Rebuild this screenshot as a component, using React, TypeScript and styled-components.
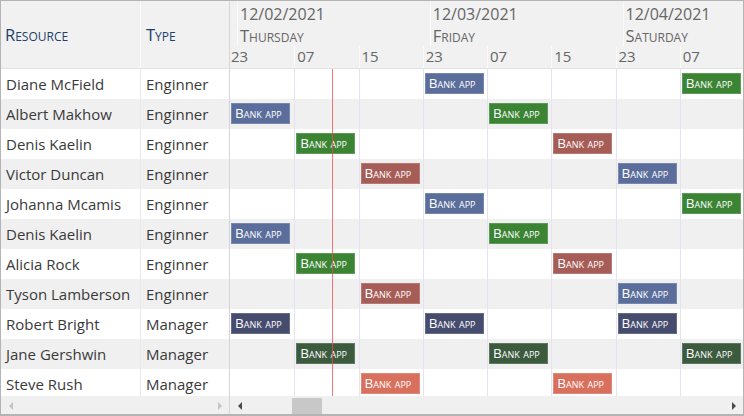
import styled, { createGlobalStyle } from 'styled-components';

const GlobalStyle = createGlobalStyle`
  html, body {
    margin: 0;
    padding: 0;
    background: #fff;
  }
  * {
    box-sizing: border-box;
  }
`;

const FONT = `'Open Sans', 'Noto Sans', 'Liberation Sans', sans-serif`;
const COL_W = 64.25;
const ROW_H = 30;

const Frame = styled.div`
  width: 744px;
  height: 416px;
  border: 1px solid #b4b4b4;
  border-bottom-width: 2px;
  display: flex;
  overflow: hidden;
  font-family: ${FONT};
  background: #fff;
`;

const LeftPane = styled.section`
  width: 229px;
  flex: none;
  display: flex;
  flex-direction: column;
  border-right: 1px solid #d6d6d6;
`;

const RightPane = styled.section`
  flex: 1;
  min-width: 0;
  display: flex;
  flex-direction: column;
  overflow: hidden;
`;

const GridHeader = styled.div`
  height: 68px;
  flex: none;
  display: grid;
  grid-template-columns: 140px 1fr;
  background: #f1f1f1;
  border-bottom: 1px solid #e3e3e3;
`;

const HeaderTitle = styled.div<{ $last?: boolean }>`
  display: flex;
  align-items: center;
  padding: 0 0 0 ${(p) => (p.$last ? '5px' : '4px')};
  font-size: 16.5px;
  font-variant: small-caps;
  color: #243d6e;
  border-right: ${(p) => (p.$last ? 'none' : '1px solid #fafafa')};
`;

const Body = styled.div`
  height: 327px;
  flex: none;
  overflow: hidden;
  position: relative;
`;

const LeftRow = styled.div<{ $alt: boolean }>`
  height: ${ROW_H}px;
  display: grid;
  grid-template-columns: 140px 1fr;
  background: ${(p) => (p.$alt ? '#f0f0f0' : '#fff')};
`;

const Cell = styled.div<{ $first?: boolean }>`
  display: flex;
  align-items: center;
  padding: 0 0 1px 5px;
  font-size: 15px;
  color: #3a3a3a;
  white-space: nowrap;
  border-right: ${(p) => (p.$first ? '1px solid #e9e9e9' : 'none')};
`;

const TimeHeader = styled.div`
  height: 68px;
  flex: none;
  display: flex;
  flex-direction: column;
  background: #f1f1f1;
  border-bottom: 1px solid #e3e3e3;
`;

const DayRow = styled.div`
  height: 45px;
  display: flex;
`;

const DayLead = styled.div`
  width: 8px;
  flex: none;
  border-right: 1px solid #fafafa;
`;

const Day = styled.div`
  width: ${COL_W * 3}px;
  flex: none;
  padding: 2px 0 0 2px;
  border-right: 1px solid #fafafa;
  color: #666;
  white-space: nowrap;
`;

const DayDate = styled.div`
  font-size: 16px;
  line-height: 22px;
`;

const DayName = styled.div`
  font-size: 16.5px;
  line-height: 21px;
  font-variant: small-caps;
`;

const TickRow = styled.div`
  height: 22px;
  display: grid;
  grid-template-columns: repeat(8, ${COL_W}px);
`;

const Tick = styled.div<{ $first: boolean }>`
  font-size: 15px;
  line-height: 20px;
  color: #666;
  padding-left: ${(p) => (p.$first ? '1px' : '2px')};
  border-left: ${(p) => (p.$first ? 'none' : '1px solid #fafafa')};
`;

const TimeRow = styled.div<{ $alt: boolean }>`
  height: ${ROW_H}px;
  display: grid;
  grid-template-columns: repeat(8, ${COL_W}px);
  background: ${(p) => (p.$alt ? '#f0f0f0' : '#fff')};
`;

const Slot = styled.div<{ $first: boolean }>`
  padding: 4px 0 0 1px;
  border-left: ${(p) => (p.$first ? 'none' : '1px solid #e4e4f0')};
`;

const Bar = styled.div<{ $color: string }>`
  width: 59px;
  height: 21px;
  background: ${(p) => p.$color};
  box-shadow: inset 0 0 0 1px rgba(255, 255, 255, 0.18);
  color: #fff;
  font-size: 13.5px;
  font-variant: small-caps;
  line-height: 20px;
  padding-left: 4px;
  white-space: nowrap;
  overflow: hidden;
`;

const NowLine = styled.div`
  position: absolute;
  top: 0;
  bottom: 0;
  left: 102px;
  width: 1px;
  background: rgba(255, 70, 70, 0.75);
  pointer-events: none;
`;

const ScrollBar = styled.div`
  height: 19px;
  flex: none;
  display: flex;
  align-items: center;
  background: #f0f0f0;
  padding: 0 7px 0 8px;
`;

const Arrow = styled.span<{ $dir: 'left' | 'right'; $muted?: boolean }>`
  width: 0;
  height: 0;
  flex: none;
  border-top: 4px solid transparent;
  border-bottom: 4px solid transparent;
  ${(p) =>
    p.$dir === 'left'
      ? `border-right: 4px solid ${p.$muted ? '#c4c4c4' : '#4a4a4a'};`
      : `border-left: 4px solid ${p.$muted ? '#c4c4c4' : '#4a4a4a'};`}
`;

const Track = styled.div`
  flex: 1;
  height: 100%;
  display: flex;
  align-items: center;
`;

const Thumb = styled.div`
  width: 30px;
  height: 16px;
  margin-left: 50px;
  background: #c8c8c8;
`;

const COLORS = {
  blue: '#5a6d9b',
  green: '#3b8434',
  brick: '#a75d57',
  navy: '#454c6e',
  forest: '#3b5a3e',
  salmon: '#d8705d',
};

type BarSpec = { col: number; color: string };

type Resource = {
  name: string;
  type: string;
  bars: BarSpec[];
};

const resources: Resource[] = [
  { name: 'Diane McField', type: 'Enginner', bars: [{ col: 3, color: COLORS.blue }, { col: 7, color: COLORS.green }] },
  { name: 'Albert Makhow', type: 'Enginner', bars: [{ col: 0, color: COLORS.blue }, { col: 4, color: COLORS.green }] },
  { name: 'Denis Kaelin', type: 'Enginner', bars: [{ col: 1, color: COLORS.green }, { col: 5, color: COLORS.brick }] },
  { name: 'Victor Duncan', type: 'Enginner', bars: [{ col: 2, color: COLORS.brick }, { col: 6, color: COLORS.blue }] },
  { name: 'Johanna Mcamis', type: 'Enginner', bars: [{ col: 3, color: COLORS.blue }, { col: 7, color: COLORS.green }] },
  { name: 'Denis Kaelin', type: 'Enginner', bars: [{ col: 0, color: COLORS.blue }, { col: 4, color: COLORS.green }] },
  { name: 'Alicia Rock', type: 'Enginner', bars: [{ col: 1, color: COLORS.green }, { col: 5, color: COLORS.brick }] },
  { name: 'Tyson Lamberson', type: 'Enginner', bars: [{ col: 2, color: COLORS.brick }, { col: 6, color: COLORS.blue }] },
  {
    name: 'Robert Bright',
    type: 'Manager',
    bars: [{ col: 0, color: COLORS.navy }, { col: 3, color: COLORS.navy }, { col: 6, color: COLORS.navy }],
  },
  {
    name: 'Jane Gershwin',
    type: 'Manager',
    bars: [{ col: 1, color: COLORS.forest }, { col: 4, color: COLORS.forest }, { col: 7, color: COLORS.forest }],
  },
  { name: 'Steve Rush', type: 'Manager', bars: [{ col: 2, color: COLORS.salmon }, { col: 5, color: COLORS.salmon }] },
];

const days = [
  { date: '12/02/2021', name: 'Thursday' },
  { date: '12/03/2021', name: 'Friday' },
  { date: '12/04/2021', name: 'Saturday' },
];

const ticks = ['23', '07', '15', '23', '07', '15', '23', '07'];

const App = () => (
  <>
    <GlobalStyle />
    <Frame>
      <LeftPane>
        <GridHeader>
          <HeaderTitle>Resource</HeaderTitle>
          <HeaderTitle $last>Type</HeaderTitle>
        </GridHeader>
        <Body>
          {resources.map((r, i) => (
            <LeftRow key={`${r.name}-${i}`} $alt={i % 2 === 1}>
              <Cell $first>{r.name}</Cell>
              <Cell>{r.type}</Cell>
            </LeftRow>
          ))}
        </Body>
        <ScrollBar>
          <Arrow $dir="left" $muted />
          <Track />
          <Arrow $dir="right" $muted />
        </ScrollBar>
      </LeftPane>

      <RightPane>
        <TimeHeader>
          <DayRow>
            <DayLead />
            {days.map((d) => (
              <Day key={d.date}>
                <DayDate>{d.date}</DayDate>
                <DayName>{d.name}</DayName>
              </Day>
            ))}
          </DayRow>
          <TickRow>
            {ticks.map((t, i) => (
              // eslint-disable-next-line react/no-array-index-key
              <Tick key={i} $first={i === 0}>
                {t}
              </Tick>
            ))}
          </TickRow>
        </TimeHeader>
        <Body>
          {resources.map((r, i) => (
            <TimeRow key={`${r.name}-${i}`} $alt={i % 2 === 1}>
              {ticks.map((_, c) => {
                const bar = r.bars.find((b) => b.col === c);
                return (
                  // eslint-disable-next-line react/no-array-index-key
                  <Slot key={c} $first={c === 0}>
                    {bar && <Bar $color={bar.color}>Bank app</Bar>}
                  </Slot>
                );
              })}
            </TimeRow>
          ))}
          <NowLine />
        </Body>
        <ScrollBar>
          <Arrow $dir="left" />
          <Track>
            <Thumb />
          </Track>
          <Arrow $dir="right" />
        </ScrollBar>
      </RightPane>
    </Frame>
  </>
);

export default App;
